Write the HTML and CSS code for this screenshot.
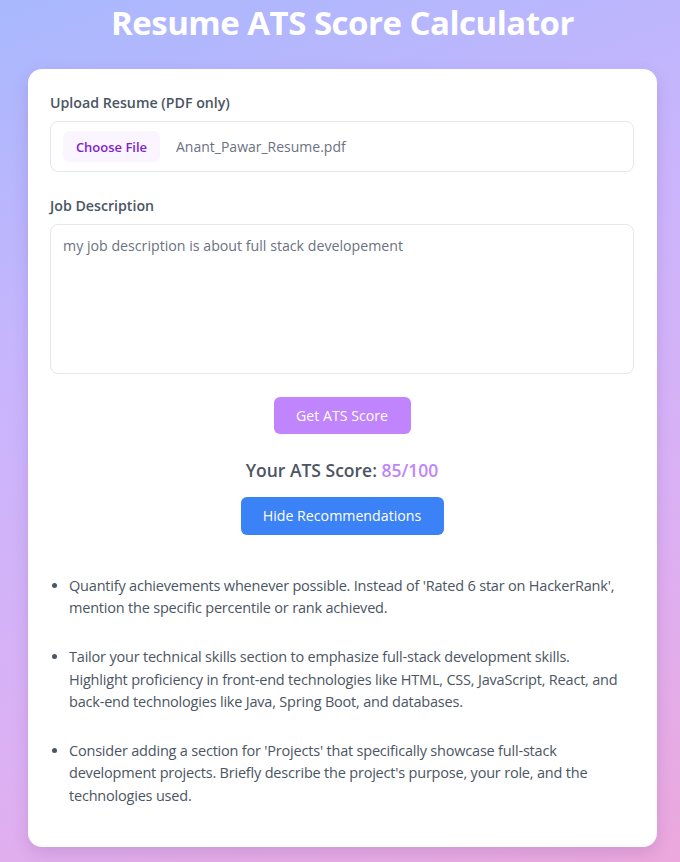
FILE: index.html
```html
<!DOCTYPE html>
<html lang="en">
<head>
<meta charset="utf-8">
<title>Resume ATS Score Calculator</title>
<link rel="stylesheet" href="styles.css">
</head>
<body>
<div class="page">
  <h1 class="title">Resume ATS Score Calculator</h1>
  <div class="card">
    <label class="label">Upload Resume (PDF only)</label>
    <div class="file-box">
      <span class="file-btn">Choose File</span>
      <span class="file-name">Anant_Pawar_Resume.pdf</span>
    </div>
    <label class="label label-jd">Job Description</label>
    <div class="textarea">my job description is about full stack developement</div>
    <div class="center">
      <button class="btn btn-purple">Get ATS Score</button>
    </div>
    <p class="score">Your ATS Score: <span class="score-val">85/100</span></p>
    <div class="center">
      <button class="btn btn-blue">Hide Recommendations</button>
    </div>
    <ul class="recs">
      <li>Quantify achievements whenever possible. Instead of 'Rated 6 star on HackerRank', mention the specific percentile or rank achieved.</li>
      <li>Tailor your technical skills section to emphasize full-stack development skills. Highlight proficiency in front-end technologies like HTML, CSS, JavaScript, React, and back-end technologies like Java, Spring Boot, and databases.</li>
      <li>Consider adding a section for 'Projects' that specifically showcase full-stack development projects. Briefly describe the project's purpose, your role, and the technologies used.</li>
    </ul>
  </div>
</div>
</body>
</html>
```

FILE: styles.css
```css
* { box-sizing: border-box; }
html, body { margin: 0; padding: 0; }
body {
  min-height: 862px;
  font-family: "Open Sans", "Noto Sans", sans-serif;
  background: linear-gradient(160deg, #a8b8fd 0%, #c9b5fd 35%, #dcb0f3 70%, #eca8dc 100%);
  color: #4b5563;
}
.page {
  padding: 0 23px 0 28px;
}
.title {
  margin: 0;
  padding-top: 2px;
  height: 69px;
  text-align: center;
  color: #ffffff;
  font-size: 33px;
  font-weight: 700;
  line-height: 42px;
  letter-spacing: -0.5px;
}
.card {
  background: #ffffff;
  border-radius: 14px;
  padding: 25px 23px 28px 22px;
  box-shadow: 0 6px 16px rgba(80, 40, 120, 0.15);
  min-height: 778px;
}
.label {
  display: block;
  font-size: 14.2px;
  font-weight: 600;
  line-height: 18px;
  color: #4b5563;
  margin-bottom: 9px;
}
.label-jd { margin-top: 25px; margin-bottom: 9px; }
.file-box {
  display: flex;
  align-items: center;
  height: 51px;
  border: 1px solid #e5e7eb;
  border-radius: 8px;
  padding: 0 12px;
}
.file-btn {
  display: inline-flex;
  align-items: center;
  justify-content: center;
  width: 97px;
  height: 31px;
  background: #faf5ff;
  color: #7e22ce;
  font-size: 13px;
  font-weight: 600;
  border-radius: 6px;
}
.file-name {
  margin-left: 16px;
  font-size: 14px;
  color: #6b7280;
}
.textarea {
  height: 150px;
  border: 1px solid #e5e7eb;
  border-radius: 8px;
  padding: 10px 12px;
  font-size: 14.2px;
  line-height: 22px;
  color: #6b7280;
}
.center { display: flex; justify-content: center; }
.btn {
  border: none;
  border-radius: 6px;
  color: #ffffff;
  font-family: inherit;
  font-size: 14.2px;
  line-height: 20px;
}
.btn-purple {
  margin-top: 23px;
  width: 137px;
  height: 37px;
  background: #c084fc;
}
.score {
  margin: 24px 0 15px;
  text-align: center;
  font-size: 17.5px;
  font-weight: 600;
  line-height: 24px;
  color: #4b5563;
}
.score-val { color: #c084fc; }
.btn-blue {
  width: 203px;
  height: 38px;
  background: #3b82f6;
}
.recs {
  margin: 40px 0 0;
  padding: 0 4px 0 19px;
  font-size: 14.5px;
  letter-spacing: -0.2px;
  line-height: 22.4px;
  color: #4b5563;
}
.recs li { margin-bottom: 26.5px; }
.recs li:last-child { margin-bottom: 0; }
```
